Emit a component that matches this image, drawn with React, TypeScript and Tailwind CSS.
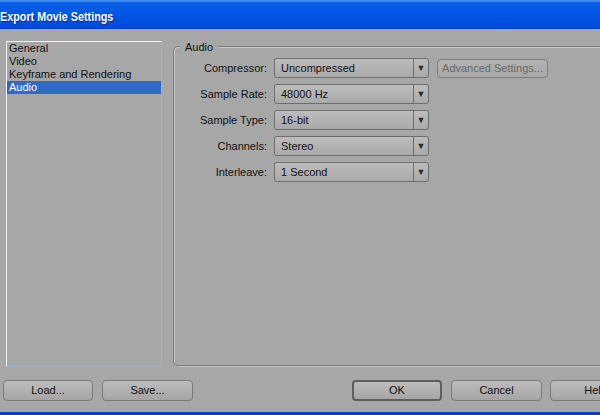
import { ReactNode } from 'react';

const sections = ['General', 'Video', 'Keyframe and Rendering', 'Audio'];

const fields = [
    { label: 'Compressor:', value: 'Uncompressed', extra: true },
    { label: 'Sample Rate:', value: '48000 Hz' },
    { label: 'Sample Type:', value: '16-bit' },
    { label: 'Channels:', value: 'Stereo' },
    { label: 'Interleave:', value: '1 Second' },
];

const Combo = ({ value }: { value: string }) => (
    <div className="flex h-[20px] w-[155px] items-stretch rounded-[3px] border border-[#6e6e6e] bg-gradient-to-b from-[#bdbdbd] to-[#a9a9a9]">
        <div className="flex flex-1 items-center pl-[6px] text-[#111]">{value}</div>
        <div className="flex w-[15px] items-center justify-center border-l border-[#6e6e6e] pt-[1px] text-[9px] text-[#2a2a2a]">
            ▼
        </div>
    </div>
);

const Button = ({
    children,
    width,
    primary,
}: {
    children: ReactNode;
    width: string;
    primary?: boolean;
}) => (
    <div
        className={`flex h-[21px] ${width} shrink-0 items-center justify-center rounded-[4px] bg-gradient-to-b from-[#bcbcbc] to-[#a5a5a5] text-[#111] ${
            primary ? 'border-2 border-[#5e5e5e]' : 'border border-[#7a7a7a]'
        }`}
    >
        {children}
    </div>
);

export default function App() {
    return (
        <div className="flex h-[415px] w-[600px] flex-col overflow-hidden bg-[#a7a7a7] font-['Liberation_Sans',sans-serif] text-[11px] leading-[13px]">
            <div className="h-[29px] shrink-0 border-t-2 border-[#3d8cf5] bg-gradient-to-b from-[#0a5fe6] via-[#0055e5] to-[#0049d8] border-b border-b-[#0040c0]">
                <div className="origin-left scale-x-[0.83] pt-[7px] font-['Liberation_Sans',sans-serif] text-[13px] font-bold leading-[16px] whitespace-nowrap text-white [text-shadow:1px_1px_0_#0b2a8a]">
                    Export Movie Settings
                </div>
            </div>

            <div className="flex h-[338px] shrink-0 pt-[12px]">
                <div className="ml-[6px] h-[326px] w-[156px] shrink-0 border border-[#f2f4f8] border-b-[#9fb2c8] border-r-[#9fb2c8]">
                    {sections.map((s) => (
                        <div
                            key={s}
                            className={`h-[13px] pl-[2px] ${
                                s === 'Audio' ? 'bg-[#316ac5] text-white' : 'text-[#111]'
                            }`}
                        >
                            {s}
                        </div>
                    ))}
                </div>

                <div className="relative ml-[11px] mr-[-20px] mt-[5px] h-[320px] flex-1 rounded-tl-[5px] rounded-bl-[5px] border border-[#7c7c7c] shadow-[inset_1px_1px_0_#c6c6c6,1px_1px_0_#c6c6c6]">
                    <div className="absolute left-[6px] top-[-6px] bg-[#a7a7a7] px-[5px] text-[#111]">
                        Audio
                    </div>
                    <div className="flex flex-col gap-[6px] pt-[11px]">
                        {fields.map((f) => (
                            <div key={f.label} className="flex items-center">
                                <div className="w-[93px] text-right text-[#111]">{f.label}</div>
                                <div className="ml-[7px]">
                                    <Combo value={f.value} />
                                </div>
                                {f.extra && (
                                    <div className="ml-[8px] flex h-[19px] w-[111px] items-center justify-center rounded-[4px] border border-[#7e7e7e] bg-gradient-to-b from-[#b3b3b3] to-[#a7a7a7] text-[#6a6a6a]">
                                        Advanced Settings...
                                    </div>
                                )}
                            </div>
                        ))}
                    </div>
                </div>
            </div>

            <div className="mt-[13px] flex h-[21px] shrink-0">
                <div className="ml-[3px]">
                    <Button width="w-[90px]">Load...</Button>
                </div>
                <div className="ml-[9px]">
                    <Button width="w-[91px]">Save...</Button>
                </div>
                <div className="ml-[159px]">
                    <Button width="w-[90px]" primary>
                        OK
                    </Button>
                </div>
                <div className="ml-[9px]">
                    <Button width="w-[91px]">Cancel</Button>
                </div>
                <div className="ml-[8px]">
                    <Button width="w-[91px]">Help</Button>
                </div>
            </div>

            <div className="mt-[11px] h-[3px] shrink-0 bg-[#0b3fc6]" />
        </div>
    );
}
